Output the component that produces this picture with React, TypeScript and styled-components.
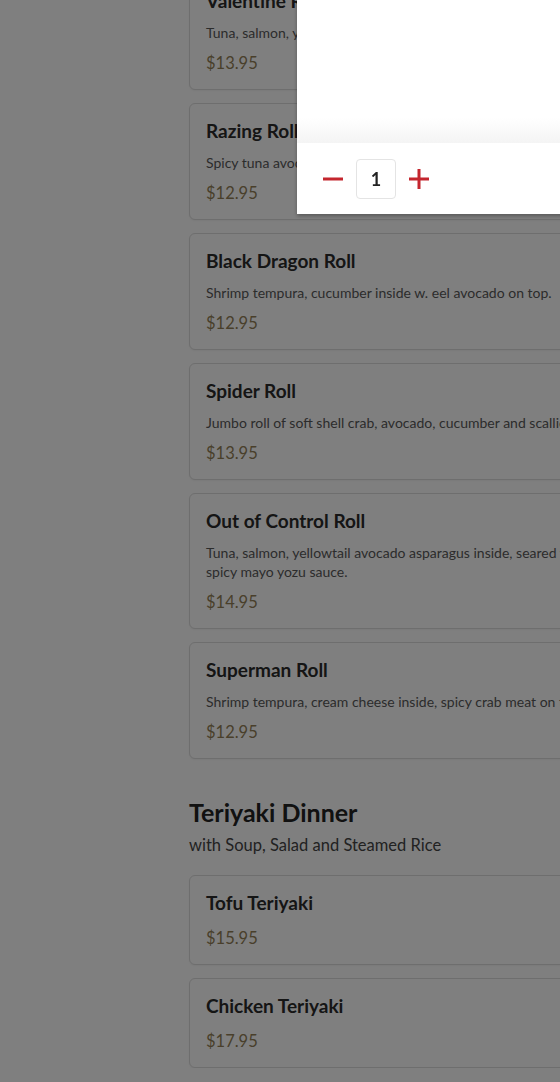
import styled, { createGlobalStyle } from "styled-components";

const GlobalStyle = createGlobalStyle`
    html, body {
        margin: 0;
        padding: 0;
        background: #ffffff;
        overflow: hidden;
        font-family: Lato, "Open Sans", sans-serif;
    }
`;

type MenuItem = { name: string; desc?: string; price: string };

const rolls: MenuItem[] = [
    { name: "Valentine Roll", desc: "Tuna, salmon, yellowtail, avocado inside, tuna on top.", price: "$13.95" },
    { name: "Razing Roll", desc: "Spicy tuna avocado inside, seared salmon on top.", price: "$12.95" },
    { name: "Black Dragon Roll", desc: "Shrimp tempura, cucumber inside w. eel avocado on top.", price: "$12.95" },
    { name: "Spider Roll", desc: "Jumbo roll of soft shell crab, avocado, cucumber and scallion.", price: "$13.95" },
    {
        name: "Out of Control Roll",
        desc: "Tuna, salmon, yellowtail avocado asparagus inside, seared white tuna on top w. spicy mayo yozu sauce.",
        price: "$14.95",
    },
    { name: "Superman Roll", desc: "Shrimp tempura, cream cheese inside, spicy crab meat on top.", price: "$12.95" },
];

const teriyaki: MenuItem[] = [
    { name: "Tofu Teriyaki", price: "$15.95" },
    { name: "Chicken Teriyaki", price: "$17.95" },
];

const App = () => {
    return (
        <>
            <GlobalStyle />
            <Page>
                <Sidebar />
                <Main>
                    <CardList>
                        {rolls.map(item => (
                            <ItemCard key={item.name}>
                                <ItemName>{item.name}</ItemName>
                                {item.desc && <ItemDesc>{item.desc}</ItemDesc>}
                                <ItemPrice hasDesc={!!item.desc}>{item.price}</ItemPrice>
                            </ItemCard>
                        ))}
                    </CardList>

                    <SectionTitle>Teriyaki Dinner</SectionTitle>
                    <SectionNote>with Soup, Salad and Steamed Rice</SectionNote>

                    <CardList>
                        {teriyaki.map(item => (
                            <ItemCard key={item.name}>
                                <ItemName>{item.name}</ItemName>
                                <ItemPrice hasDesc={false}>{item.price}</ItemPrice>
                            </ItemCard>
                        ))}
                    </CardList>
                </Main>
            </Page>

            <Backdrop />

            <Modal>
                <ModalBody />
                <ModalFooter>
                    <Stepper>
                        <StepButton aria-label="decrease">
                            <svg width="20" height="20" viewBox="0 0 20 20">
                                <rect x="0" y="8.5" width="20" height="3" fill="currentColor" />
                            </svg>
                        </StepButton>
                        <QtyBox>1</QtyBox>
                        <StepButton aria-label="increase">
                            <svg width="20" height="20" viewBox="0 0 20 20">
                                <rect x="0" y="8.5" width="20" height="3" fill="currentColor" />
                                <rect x="8.5" y="0" width="3" height="20" fill="currentColor" />
                            </svg>
                        </StepButton>
                    </Stepper>
                </ModalFooter>
            </Modal>
        </>
    );
};

export default App;

const Page = styled.div`
    display: flex;
    width: 780px;
`;

const Sidebar = styled.aside`
    flex: 0 0 189px;
`;

const Main = styled.main`
    flex: 0 0 540px;
    margin-top: -27px;
`;

const CardList = styled.div`
    display: flex;
    flex-direction: column;
    gap: 13px;
`;

const ItemCard = styled.div`
    border: 1px solid #dcdcdc;
    border-radius: 6px;
    background: #ffffff;
    padding: 15px 16px 14px 16px;
    box-shadow: 0 1px 2px rgba(0, 0, 0, 0.05);
`;

const ItemName = styled.div`
    font-size: 19px;
    font-weight: 700;
    line-height: 24px;
    color: #2a2a2a;
`;

const ItemDesc = styled.div`
    margin-top: 10px;
    font-size: 14px;
    line-height: 19px;
    color: #585858;
`;

const ItemPrice = styled.div<{ hasDesc: boolean }>`
    margin-top: ${props => (props.hasDesc ? "9px" : "11px")};
    font-size: 16.5px;
    line-height: 24px;
    color: #927f56;
`;

const SectionTitle = styled.h2`
    margin: 38px 0 0 0;
    font-size: 25px;
    line-height: 30px;
    font-weight: 700;
    color: #222222;
`;

const SectionNote = styled.p`
    margin: 7px 0 19px 0;
    font-size: 16.5px;
    line-height: 22px;
    color: #444444;
`;

const Backdrop = styled.div`
    position: fixed;
    inset: 0;
    background: rgba(0, 0, 0, 0.5);
`;

const Modal = styled.div`
    position: fixed;
    top: 0;
    left: 297px;
    width: 420px;
    height: 214px;
    background: #ffffff;
    display: flex;
    flex-direction: column;
    box-shadow: 0 2px 4px rgba(0, 0, 0, 0.3);
`;

const ModalBody = styled.div`
    flex: 0 0 143px;
    background: linear-gradient(to bottom, #ffffff 0, #ffffff 118px, #f4f4f4 143px);
`;

const ModalFooter = styled.div`
    flex: 1;
    display: flex;
    align-items: center;
    padding: 0 16px;
`;

const Stepper = styled.div`
    display: flex;
    align-items: center;
    gap: 3px;
`;

const StepButton = styled.button`
    width: 40px;
    height: 40px;
    display: flex;
    align-items: center;
    justify-content: center;
    border: none;
    background: none;
    padding: 0;
    color: #c4262e;
    cursor: pointer;
`;

const QtyBox = styled.div`
    width: 38px;
    height: 38px;
    border: 1px solid #e4e4e4;
    border-radius: 4px;
    display: flex;
    align-items: center;
    justify-content: center;
    font-size: 18px;
    font-weight: 700;
    color: #222222;
`;
